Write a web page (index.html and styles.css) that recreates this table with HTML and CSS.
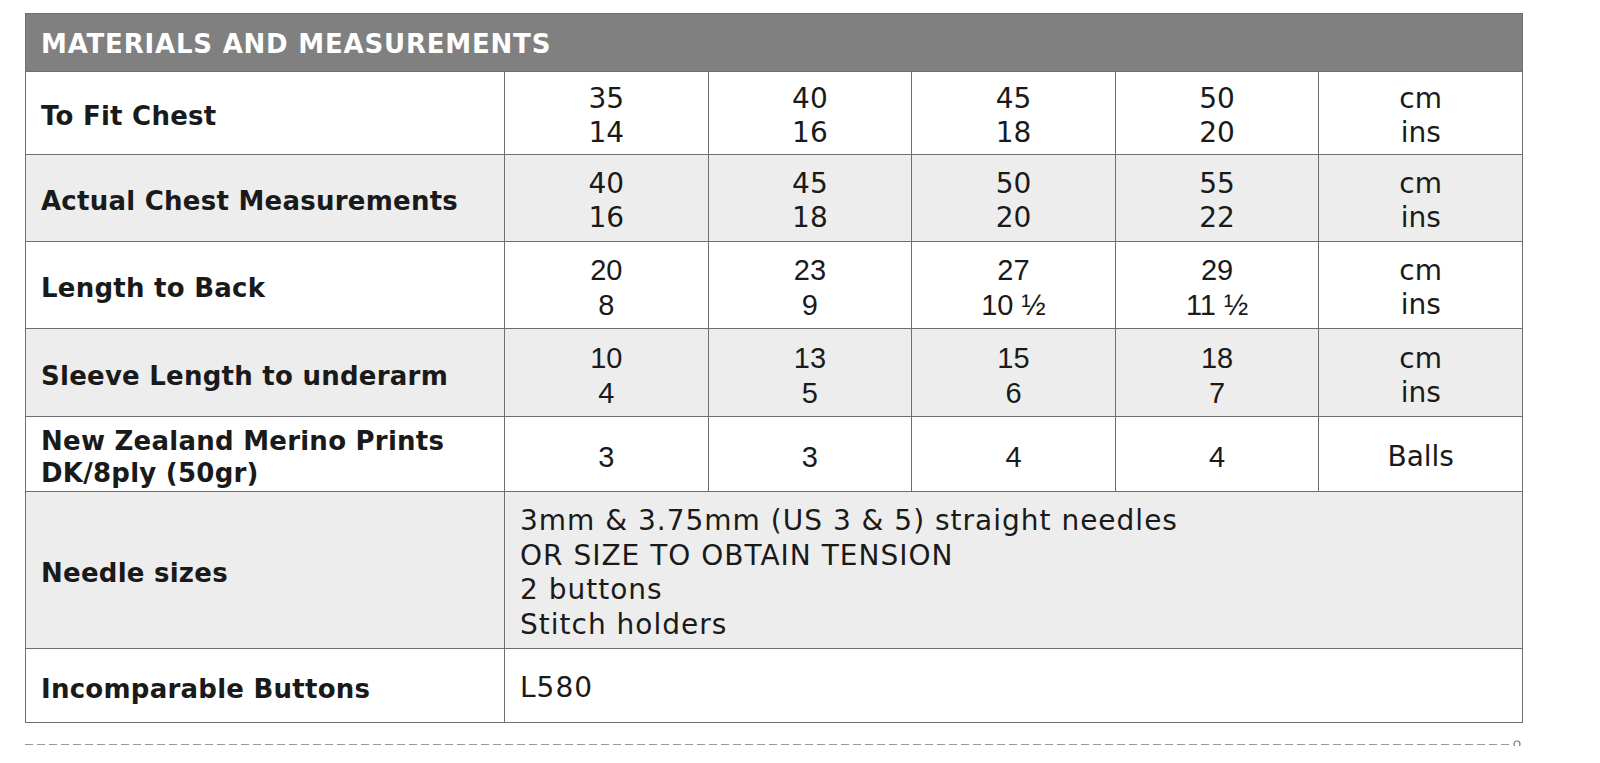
FILE: index.html
```html
<!DOCTYPE html>
<html>
<head>
<meta charset="utf-8">
<link rel="stylesheet" href="styles.css">
</head>
<body>
<div class="page">
  <table class="spec">
    <colgroup>
      <col class="c-label"><col class="c-val"><col class="c-val"><col class="c-val"><col class="c-val"><col class="c-val">
    </colgroup>
    <thead>
      <tr class="head"><th colspan="6">MATERIALS AND MEASUREMENTS</th></tr>
    </thead>
    <tbody>
      <tr class="r1">
        <td class="label">To Fit Chest</td>
        <td class="v">35<br>14</td><td class="v">40<br>16</td><td class="v">45<br>18</td><td class="v">50<br>20</td>
        <td class="u">cm<br>ins</td>
      </tr>
      <tr class="r2 alt">
        <td class="label">Actual Chest Measurements</td>
        <td class="v">40<br>16</td><td class="v">45<br>18</td><td class="v">50<br>20</td><td class="v">55<br>22</td>
        <td class="u">cm<br>ins</td>
      </tr>
      <tr class="r3">
        <td class="label">Length to Back</td>
        <td class="v a">20<br>8</td><td class="v a">23<br>9</td><td class="v a">27<br>10 ½</td><td class="v a">29<br>11 ½</td>
        <td class="u">cm<br>ins</td>
      </tr>
      <tr class="r4 alt">
        <td class="label">Sleeve Length to underarm</td>
        <td class="v a">10<br>4</td><td class="v a">13<br>5</td><td class="v a">15<br>6</td><td class="v a">18<br>7</td>
        <td class="u">cm<br>ins</td>
      </tr>
      <tr class="r5">
        <td class="label">New Zealand Merino Prints<br>DK/8ply (50gr)</td>
        <td class="v a">3</td><td class="v a">3</td><td class="v a">4</td><td class="v a">4</td>
        <td class="u">Balls</td>
      </tr>
      <tr class="r6 alt">
        <td class="label">Needle sizes</td>
        <td class="txt" colspan="5">3mm &amp; 3.75mm (US 3 &amp; 5) straight needles<br>OR SIZE TO OBTAIN TENSION<br>2 buttons<br>Stitch holders</td>
      </tr>
      <tr class="r7">
        <td class="label">Incomparable Buttons</td>
        <td class="txt" colspan="5">L580</td>
      </tr>
    </tbody>
  </table>
  <div class="cutline">
    <div class="dash"></div>
    <svg class="mark" width="10" height="8" viewBox="0 0 10 8"><circle cx="5" cy="6" r="3" fill="none" stroke="#777" stroke-width="1.2"/></svg>
  </div>
</div>
</body>
</html>
```
FILE: styles.css
```css
html, body {
  margin: 0;
  padding: 0;
  background: #ffffff;
  height: 763px;
  overflow: hidden;
}
.page {
  padding: 13px 0 0 25px;
  width: 1497px;
}
.spec {
  width: 1497px;
  border-collapse: collapse;
  table-layout: fixed;
  font-family: "DejaVu Sans", Verdana, sans-serif;
  color: #1a1a1a;
}
.c-label { width: 479px; }
.c-val { width: 203.6px; }
.spec th, .spec td {
  border: 1px solid #6f6f6f;
  padding: 6px 0 0 0;
}
.head th {
  background: #808080;
  color: #ffffff;
  height: 58px;
  box-sizing: border-box;
  text-align: left;
  padding: 2px 0 0 15px;
  font-size: 26px;
  font-weight: bold;
  letter-spacing: 0.8px;
  vertical-align: middle;
}
.alt td { background: #ededed; }
.label {
  font-weight: bold;
  font-size: 26px;
  letter-spacing: 0.25px;
  padding-left: 15px !important;
  line-height: 32px;
  vertical-align: middle;
}
.v, .u {
  text-align: center;
  font-size: 28px;
  line-height: 34px;
  vertical-align: middle;
}
.v.a {
  font-family: "Liberation Sans", Arial, sans-serif;
  font-size: 29px;
  line-height: 35px;
}
.txt {
  font-size: 28px;
  line-height: 34.5px;
  letter-spacing: 1px;
  padding-left: 15px !important;
  vertical-align: middle;
}
.r1 { height: 83px; }
.r2 { height: 87px; }
.r3 { height: 87px; }
.r4 { height: 88px; }
.r5 { height: 75px; }
.r6 { height: 157px; }
.r7 { height: 74px; }
.cutline {
  display: flex;
  align-items: flex-end;
  margin-top: 15px;
  width: 1497px;
}
.dash {
  flex: 1;
  height: 1px;
  margin-bottom: 1px;
  background: repeating-linear-gradient(to right, #9a9a9a 0 8px, transparent 8px 12px);
}
.mark { margin-left: 1px; }
```
